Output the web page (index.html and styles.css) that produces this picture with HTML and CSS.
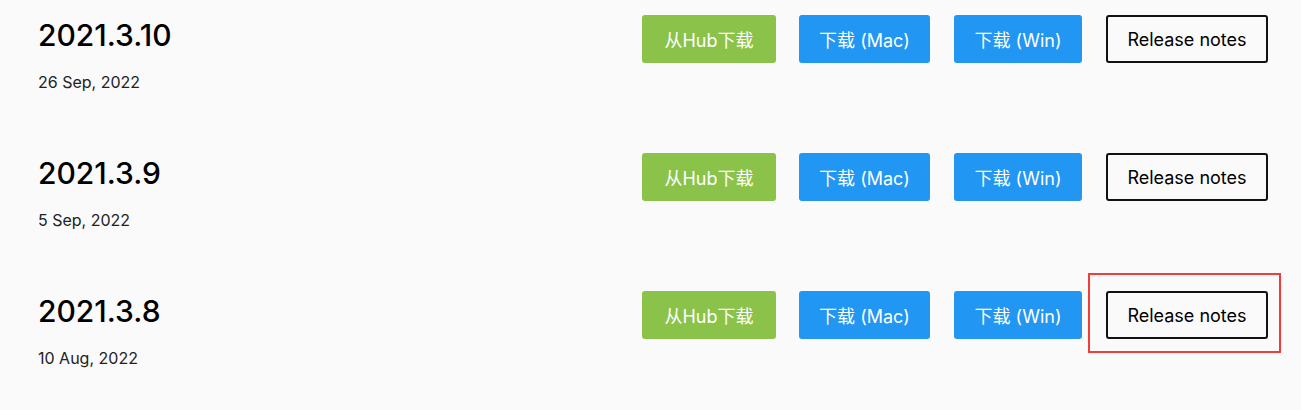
FILE: index.html
```html
<!DOCTYPE html>
<html lang="zh-CN">
<head>
<meta charset="utf-8">
<title>Releases</title>
<link rel="stylesheet" href="styles.css">
</head>
<body>
<div class="list">
  <div class="release">
    <div class="info">
      <div class="version">2021.3.10</div>
      <div class="date">26 Sep, 2022</div>
    </div>
    <div class="actions">
      <a class="btn btn-hub">从Hub下载</a>
      <a class="btn btn-dl btn-mac">下载 (Mac)</a>
      <a class="btn btn-dl btn-win">下载 (Win)</a>
      <a class="btn btn-notes">Release notes</a>
    </div>
  </div>
  <div class="release">
    <div class="info">
      <div class="version">2021.3.9</div>
      <div class="date">5 Sep, 2022</div>
    </div>
    <div class="actions">
      <a class="btn btn-hub">从Hub下载</a>
      <a class="btn btn-dl btn-mac">下载 (Mac)</a>
      <a class="btn btn-dl btn-win">下载 (Win)</a>
      <a class="btn btn-notes">Release notes</a>
    </div>
  </div>
  <div class="release">
    <div class="info">
      <div class="version">2021.3.8</div>
      <div class="date">10 Aug, 2022</div>
    </div>
    <div class="actions">
      <a class="btn btn-hub">从Hub下载</a>
      <a class="btn btn-dl btn-mac">下载 (Mac)</a>
      <a class="btn btn-dl btn-win">下载 (Win)</a>
      <span class="highlight-wrap">
        <a class="btn btn-notes">Release notes</a>
        <span class="highlight"></span>
      </span>
    </div>
  </div>
</div>
</body>
</html>
```

FILE: styles.css
```css
html, body {
  margin: 0;
  padding: 0;
  background: #fafafa;
}
body {
  font-family: Inter, "Noto Sans CJK SC", sans-serif;
  color: #000;
  overflow: hidden;
}
.list {
  margin-top: -1px;
}
.release {
  display: flex;
  justify-content: space-between;
  align-items: flex-start;
  height: 138px;
  box-sizing: border-box;
  padding: 16px 33px 0 38px;
}
.info {
  padding-top: 2px;
}
.version {
  font-size: 30px;
  line-height: 36px;
  font-weight: 500;
  color: #000;
}
.date {
  margin-top: 19px;
  font-size: 16px;
  line-height: 20px;
  color: #222;
}
.actions {
  display: flex;
  align-items: center;
  gap: 24px;
}
.btn {
  display: flex;
  align-items: center;
  justify-content: center;
  height: 48px;
  box-sizing: border-box;
  border-radius: 3px;
  font-size: 18px;
  color: #fff;
  text-decoration: none;
  font-family: Inter, "Noto Sans CJK SC", sans-serif;
}
.btn-hub {
  width: 134px;
  margin-right: -1px;
  background: #8bc34a;
}
.btn-dl {
  background: #2196f3;
}
.btn-mac {
  width: 131px;
}
.btn-win {
  width: 128px;
}
.btn-notes {
  width: 162px;
  border: 2px solid #111;
  color: #000;
  background: #fafafa;
}
.highlight-wrap {
  position: relative;
  display: block;
}
.highlight {
  position: absolute;
  left: -18px;
  top: -18px;
  right: -13px;
  bottom: -14px;
  border: 2px solid #f23b3b;
}
```
